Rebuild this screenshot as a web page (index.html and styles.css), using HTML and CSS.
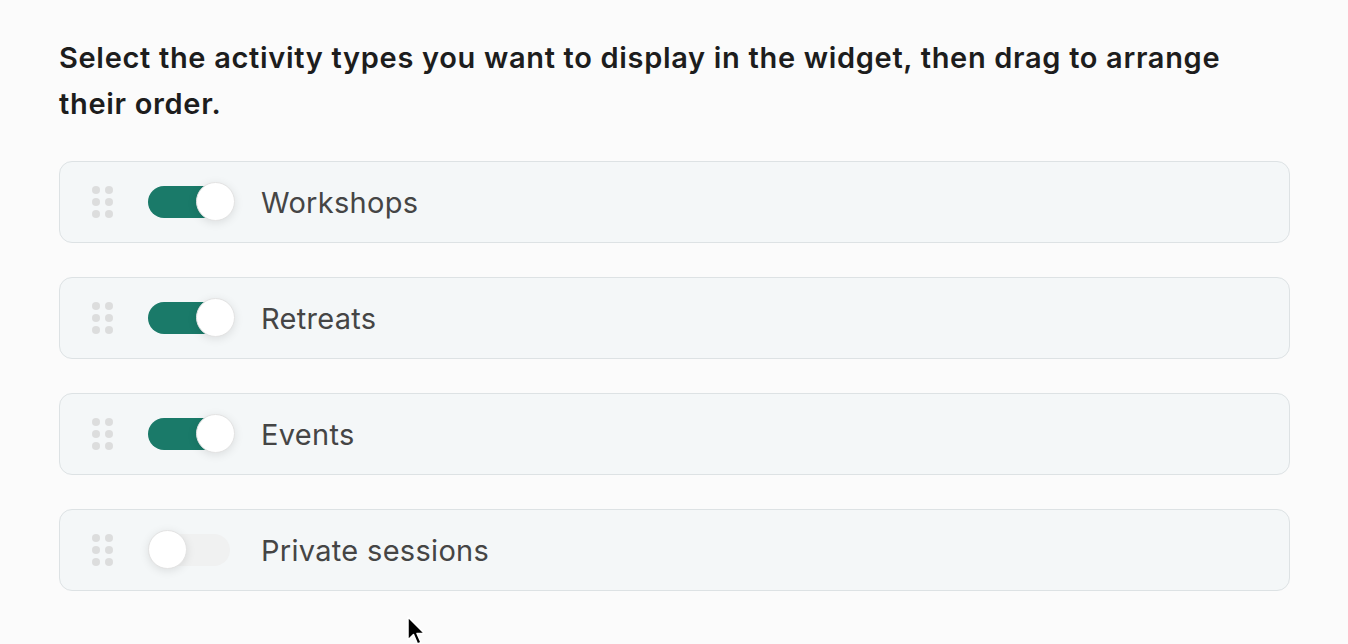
FILE: index.html
```html
<!DOCTYPE html>
<html lang="en">
<head>
<meta charset="utf-8">
<title>Activity types</title>
<link rel="stylesheet" href="styles.css">
</head>
<body>
<main class="page">
  <h1 class="intro">Select the activity types you want to display in the widget, then drag to arrange their order.</h1>
  <ul class="list">
    <li class="item">
      <span class="handle"><i></i><i></i><i></i><i></i><i></i><i></i></span>
      <span class="toggle on"><span class="knob"></span></span>
      <span class="label">Workshops</span>
    </li>
    <li class="item">
      <span class="handle"><i></i><i></i><i></i><i></i><i></i><i></i></span>
      <span class="toggle on"><span class="knob"></span></span>
      <span class="label">Retreats</span>
    </li>
    <li class="item">
      <span class="handle"><i></i><i></i><i></i><i></i><i></i><i></i></span>
      <span class="toggle on"><span class="knob"></span></span>
      <span class="label">Events</span>
    </li>
    <li class="item">
      <span class="handle"><i></i><i></i><i></i><i></i><i></i><i></i></span>
      <span class="toggle"><span class="knob"></span></span>
      <span class="label">Private sessions</span>
    </li>
  </ul>
</main>
<svg class="cursor" width="22" height="30" viewBox="0 0 22 30" aria-hidden="true">
  <path d="M2 1 L2 24 L7.5 18.5 L11.5 28 L15 26.5 L11 17.5 L18.5 17.5 Z" fill="#000" stroke="#fff" stroke-width="1.5" stroke-linejoin="round"/>
</svg>
</body>
</html>
```
FILE: styles.css
```css
html, body {
  margin: 0;
  padding: 0;
  background: #fbfbfb;
}
body {
  font-family: Inter, "Noto Sans", "Liberation Sans", sans-serif;
  height: 644px;
  overflow: hidden;
  position: relative;
}
.page {
  padding: 35px 58px 0 59px;
}
.intro {
  margin: 0;
  max-width: 1200px;
  font-size: 29px;
  line-height: 46px;
  font-weight: 600;
  color: #1d1d1d;
  letter-spacing: 0.68px;
}
.list {
  list-style: none;
  margin: 34px 0 0;
  padding: 0;
  display: flex;
  flex-direction: column;
  gap: 34px;
}
.item {
  height: 82px;
  box-sizing: border-box;
  border: 1.5px solid #dde2e4;
  border-radius: 13px;
  background: #f4f7f8;
  display: flex;
  align-items: center;
  padding-left: 32px;
}
.handle {
  display: grid;
  grid-template-columns: 8px 8px;
  grid-auto-rows: 8px;
  column-gap: 5px;
  row-gap: 4px;
}
.handle i {
  display: block;
  width: 8px;
  height: 8px;
  border-radius: 50%;
  background: #dcdddd;
}
.toggle {
  position: relative;
  width: 82px;
  height: 32px;
  border-radius: 16px;
  background: #f0f1f1;
  margin-left: 35px;
  flex: none;
}
.toggle.on {
  background: #1a7a69;
}
.knob {
  position: absolute;
  top: -4px;
  left: 0;
  width: 39px;
  height: 39px;
  box-sizing: border-box;
  border-radius: 50%;
  background: #fff;
  border: 1px solid #e3e3e3;
  box-shadow: 0 2px 10px rgba(0, 0, 0, 0.1);
}
.toggle.on .knob {
  left: 48px;
}
.label {
  margin-left: 31px;
  font-size: 29px;
  color: #454545;
  font-weight: 400;
  letter-spacing: 0.3px;
}
.cursor {
  position: absolute;
  left: 406px;
  top: 616px;
}
```
